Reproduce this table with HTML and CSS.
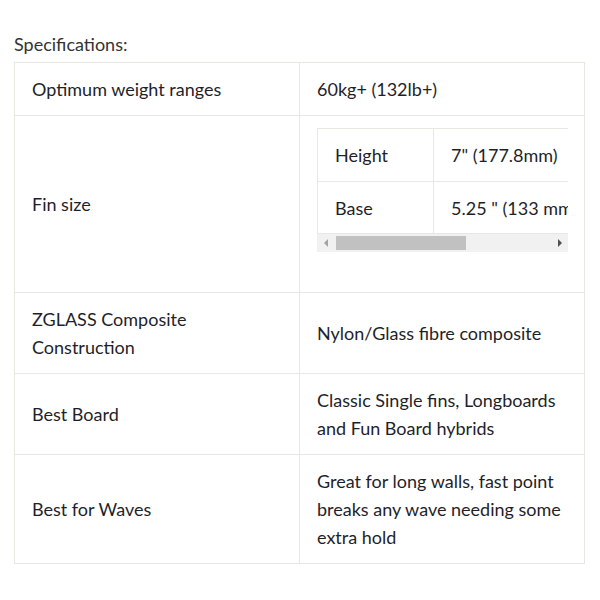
FILE: index.html
```html
<!DOCTYPE html>
<html>
<head>
<meta charset="utf-8">
<link rel="stylesheet" href="styles.css">
</head>
<body>
<div class="page">
  <p class="title">Specifications:</p>
  <table class="specs">
    <colgroup><col class="c1"><col class="c2"></colgroup>
    <tr><td>Optimum weight ranges</td><td>60kg+ (132lb+)</td></tr>
    <tr>
      <td>Fin size</td>
      <td class="nested">
        <div class="scroller">
          <div class="clip">
            <table class="inner">
              <colgroup><col class="i1"><col class="i2"></colgroup>
              <tr><td>Height</td><td>7" (177.8mm)</td></tr>
              <tr><td>Base</td><td>5.25 " (133 mm)</td></tr>
            </table>
          </div>
          <div class="bar">
            <span class="arrow left"></span>
            <span class="track"><span class="thumb"></span></span>
            <span class="arrow right"></span>
          </div>
        </div>
      </td>
    </tr>
    <tr><td>ZGLASS Composite Construction</td><td>Nylon/Glass fibre composite</td></tr>
    <tr><td>Best Board</td><td>Classic Single fins, Longboards and Fun Board hybrids</td></tr>
    <tr><td>Best for Waves</td><td>Great for long walls, fast point breaks any wave needing some extra hold</td></tr>
  </table>
</div>
</body>
</html>
```
FILE: styles.css
```css
html, body { margin: 0; padding: 0; background: #fff; }
body {
  font-family: Lato, "Open Sans", sans-serif;
  font-size: 18px;
  line-height: 28px;
  color: #1f1f2a;
}
.page { padding: 30px 14px 0 14px; }
.title { margin: 0 0 4px 0; color: #333; }
.specs {
  width: 571px;
  border-collapse: collapse;
  table-layout: fixed;
  border: 1px solid #e8e7e2;
}
.specs .c1 { width: 285px; }
.specs td {
  border: 1px solid #e8e7e2;
  padding: 12px 17px 12px 17px;
  vertical-align: middle;
}
.scroller { width: 251px; margin-bottom: 28px; }
.clip { overflow: hidden; width: 251px; }
.inner {
  width: 418px;
  border-collapse: collapse;
  table-layout: fixed;
}
.inner .i1 { width: 116px; }
.inner td {
  border: 1px solid #e8e7e2;
  padding: 12px 17px 11.5px 17px;
  white-space: nowrap;
}
.bar {
  display: flex;
  height: 18px;
  background: #f1f1f1;
}
.arrow { width: 17px; display: flex; align-items: center; justify-content: center; }
.arrow::before { content: ""; width: 0; height: 0; border-top: 4px solid transparent; border-bottom: 4px solid transparent; }
.arrow.left::before { border-right: 4px solid #a3a3a3; }
.arrow.right::before { border-left: 4px solid #505050; }
.track { flex: 1; display: flex; align-items: center; }
.thumb { width: 130px; height: 14px; margin-left: 2px; background: #c1c1c1; }
```
